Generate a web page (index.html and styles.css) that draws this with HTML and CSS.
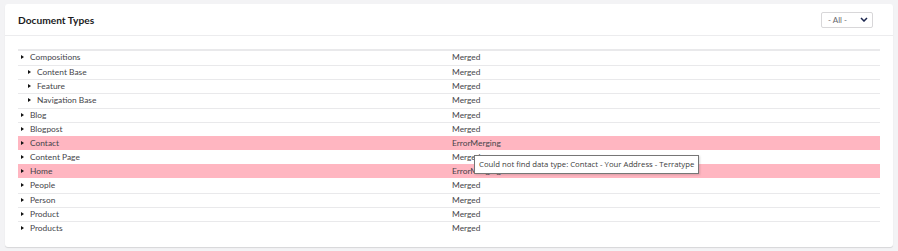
FILE: index.html
```html
<!DOCTYPE html>
<html>
<head>
	<title>Document Types</title>
	<meta charset="utf-8" />
	<link rel="stylesheet" href="styles.css">
</head>
<body>
	<div class="panel">
		<div class="panel-header">
			<h1>Document Types</h1>
			<div class="filter">
				<span>- All -</span>
				<svg width="8" height="5" viewBox="0 0 8 5"><path d="M1 1 L4 4 L7 1" fill="none" stroke="#1b264f" stroke-width="1.5"/></svg>
			</div>
		</div>
		<div class="panel-body">
			<div class="grid">
				<div class="row"><div class="name">Compositions</div><div class="status">Merged</div></div>
				<div class="row child"><div class="name">Content Base</div><div class="status">Merged</div></div>
				<div class="row child"><div class="name">Feature</div><div class="status">Merged</div></div>
				<div class="row child"><div class="name">Navigation Base</div><div class="status">Merged</div></div>
				<div class="row"><div class="name">Blog</div><div class="status">Merged</div></div>
				<div class="row"><div class="name">Blogpost</div><div class="status">Merged</div></div>
				<div class="row error"><div class="name">Contact</div><div class="status">ErrorMerging</div></div>
				<div class="row"><div class="name">Content Page</div><div class="status">Merged
					<div class="tooltip">Could not find data type: Contact - Your Address - Terratype</div></div></div>
				<div class="row error"><div class="name">Home</div><div class="status">ErrorMerging</div></div>
				<div class="row"><div class="name">People</div><div class="status">Merged</div></div>
				<div class="row"><div class="name">Person</div><div class="status">Merged</div></div>
				<div class="row"><div class="name">Product</div><div class="status">Merged</div></div>
				<div class="row"><div class="name">Products</div><div class="status">Merged</div></div>
			</div>
		</div>
	</div>
</body>
</html>
```
FILE: styles.css
```css
body {
	margin: 0;
	padding: 4px 5px;
	background-color: #f3f3f5;
	font-family: Lato, "Open Sans", sans-serif;
	color: #303033;
}

.panel {
	background-color: #fff;
	border-radius: 3px;
	box-shadow: 0 1px 1px rgba(0, 0, 0, 0.12);
	height: 243px;
	box-sizing: border-box;
}

	.panel-header {
		display: flex;
		align-items: center;
		justify-content: space-between;
		height: 32px;
		padding: 0 20px 0 13px;
		border-bottom: 1px solid #ececee;
		box-sizing: border-box;
	}

	.panel-header h1 {
		margin: 0;
		font-size: 10.2px;
		font-weight: bold;
		color: #1b1b1d;
	}

	.filter {
		display: flex;
		align-items: center;
		justify-content: space-between;
		width: 52px;
		height: 16px;
		box-sizing: border-box;
		padding: 0 4px 0 6px;
		border: 1px solid #d8d7d9;
		border-radius: 2px;
		font-size: 8px;
		color: #68676b;
	}

	.panel-body {
		padding: 13px 13px 0 13px;
	}

.grid {
	border-top: 2px solid #e9e9eb;
}

	.row {
		display: flex;
		height: 14.17px;
		line-height: 13px;
		border-top: 1px solid #e9e9eb;
		box-sizing: border-box;
		font-size: 8.4px;
		color: #45454a;
	}

	.row:first-child {
		border-top: none;
	}

	.row.error {
		background-color: #ffb6c1;
		border-top-color: #ffb6c1;
	}

	.row.error + .row {
		border-top-color: #fff;
	}

	.name {
		flex: 0 0 434px;
		box-sizing: border-box;
		padding-left: 12px;
		position: relative;
	}

	.name::before {
		content: "";
		position: absolute;
		left: 3px;
		top: 4px;
		border-left: 3.5px solid #111;
		border-top: 2.5px solid transparent;
		border-bottom: 2.5px solid transparent;
	}

	.child .name {
		padding-left: 19px;
	}

	.child .name::before {
		left: 10px;
	}

	.status {
		flex: 1;
		position: relative;
	}

.tooltip {
	position: absolute;
	left: 22px;
	top: 4px;
	white-space: nowrap;
	padding: 2px 4px 2px 4px;
	background-color: #fff;
	border: 1px solid #767676;
	font-family: "Open Sans", sans-serif;
	font-size: 7.75px;
	line-height: 13px;
	color: #3c3c3c;
	box-shadow: 1px 1px 2px rgba(0, 0, 0, 0.15);
	z-index: 2;
}
```
